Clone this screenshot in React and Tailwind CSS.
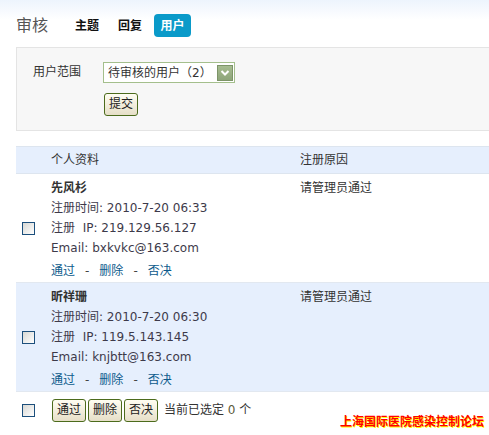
import React from "react";

const FONT = { fontFamily: '"DejaVu Sans", "Noto Sans CJK SC", sans-serif' };

function Check() {
  return (
    <span className="block w-[13px] h-[13px] border border-[#1c4f7c] bg-gradient-to-br from-[#d8d8d4] to-[#ffffff]" />
  );
}

function Btn({ children, className = "" }) {
  return (
    <span
      className={
        "inline-flex items-center justify-center h-[23px] px-[4px] border border-[#4c6b1c] rounded-[3px] bg-gradient-to-b from-[#fffdf2] to-[#e6dfc8] text-[12px] text-[#222] leading-none " +
        className
      }
    >
      {children}
    </span>
  );
}

function Row({ name, time, ip, email, alt }) {
  return (
    <div className={"flex h-[109px] border-b border-[#e2e8f0] " + (alt ? "bg-[#e6effd]" : "bg-white")}>
      <div className="w-[35px] flex items-center pl-[6px]">
        <Check />
      </div>
      <div className="w-[249px] pt-[4px] text-[12px] text-[#3d3a4a] leading-[20px]">
        <div className="font-bold text-[#333]">{name}</div>
        <div>注册时间: {time}</div>
        <div>注册&nbsp; IP: {ip}</div>
        <div>Email: {email}</div>
        <div className="mt-[3px] text-[#0d5b8c] flex">
          <span>通过</span>
          <span className="text-[#444] mx-[10px]">-</span>
          <span>删除</span>
          <span className="text-[#444] mx-[10px]">-</span>
          <span>否决</span>
        </div>
      </div>
      <div className="flex-1 pt-[4px] text-[12px] leading-[20px] text-[#333]">请管理员通过</div>
    </div>
  );
}

export default function App() {
  return (
    <div style={FONT} className="relative w-[489px] h-[435px] overflow-hidden bg-gradient-to-b from-[#edf4fd] via-white to-white bg-[length:100%_40px] bg-no-repeat">
      <div className="pl-[16px] pt-[14px]">
        <div className="flex items-center h-[23px]">
          <span className="text-[16px] text-[#555] w-[59px] leading-none">审核</span>
          <span className="text-[12px] font-bold text-[#111] w-[43px]">主题</span>
          <span className="text-[12px] font-bold text-[#111] w-[36px]">回复</span>
          <span className="h-[23px] w-[37px] rounded-[4px] bg-[#0a9ac9] text-white text-[12px] font-bold flex items-center justify-center">用户</span>
        </div>
        <div className="mt-[10px] bg-[#f7f7f7] border border-[#e4e4e4] border-r-0 h-[84px] pt-[14px] pl-[16px]">
          <div className="flex">
            <div className="w-[70px] text-[12px] text-[#333] leading-[20px]">用户范围</div>
            <div>
              <div className="h-[21px] w-[132px] border border-[#a4bf8c] bg-white flex items-center justify-between pl-[4px] pr-[1px]">
                <span className="text-[12px] text-[#333]">待审核的用户（2）</span>
                <span className="w-[16px] h-[16px] bg-gradient-to-b from-[#a6bc90] to-[#8ea57a] border border-[#7d9468] flex items-center justify-center">
                  <svg width="10" height="8" viewBox="0 0 10 8">
                    <path d="M1.5 2 L5 5.5 L8.5 2" stroke="white" strokeWidth="2" fill="none" />
                  </svg>
                </span>
              </div>
              <div className="mt-[8px] ml-[1px]">
                <Btn className="w-[34px]">提交</Btn>
              </div>
            </div>
          </div>
        </div>
        <div className="mt-[15px]">
          <div className="flex h-[28px] bg-[#e6effd] border-t border-b border-[#dde5ef] items-center text-[12px] text-[#333]">
            <div className="w-[35px]" />
            <div className="w-[249px]">个人资料</div>
            <div className="flex-1">注册原因</div>
          </div>
          <Row name="先风杉" time="2010-7-20 06:33" ip="219.129.56.127" email="bxkvkc@163.com" />
          <Row name="昕祥珊" time="2010-7-20 06:30" ip="119.5.143.145" email="knjbtt@163.com" alt />
          <div className="flex items-center h-[36px]">
            <div className="w-[36px] pl-[6px]">
              <Check />
            </div>
            <div className="flex items-center gap-[2px]">
              <Btn className="w-[34px]">通过</Btn>
              <Btn className="w-[34px]">删除</Btn>
              <Btn className="w-[34px]">否决</Btn>
              <span className="ml-[4px] text-[12px] text-[#333]">当前已选定 <span className="text-[#5a5a3a]">0</span> 个</span>
            </div>
          </div>
        </div>
      </div>
      <div
        className="absolute right-[5px] top-[414px] text-[12px] text-[#ff0000] font-bold leading-[16px]"
        style={{ textShadow: "1px 1px 0 #ffff00" }}
      >
        上海国际医院感染控制论坛
      </div>
    </div>
  );
}
